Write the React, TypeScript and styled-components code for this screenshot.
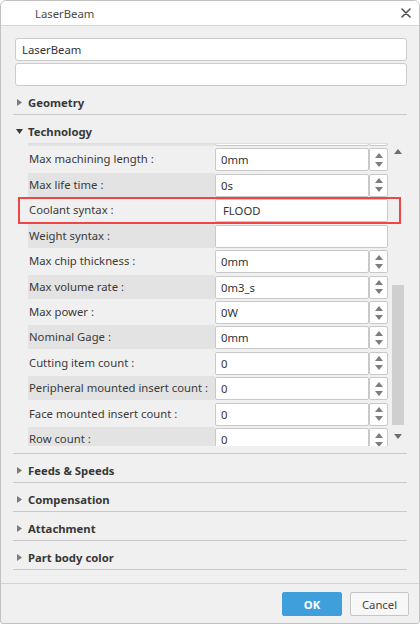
import React, { useLayoutEffect, useRef } from "react";
import styled, { createGlobalStyle } from "styled-components";

const ROW_H = 25.45;
const FS = "11.3px";

const GlobalStyle = createGlobalStyle`
  html, body {
    margin: 0;
    padding: 0;
    background: #ffffff;
  }
  * {
    box-sizing: border-box;
  }
  body {
    font-family: "Noto Sans", "Open Sans", sans-serif;
    color: #333;
  }
`;

const Window = styled.div`
  width: 420px;
  height: 624px;
  border: 1px solid #c2c2c2;
  border-radius: 6px 6px 3px 3px;
  background: #f0f0f0;
  display: flex;
  flex-direction: column;
  overflow: hidden;
`;

const TitleBar = styled.div`
  height: 25px;
  flex: none;
  background: #ffffff;
  border-bottom: 1px solid #d6d6d6;
  display: flex;
  align-items: center;
  justify-content: space-between;
  padding: 0 7px 0 34px;
`;

const Title = styled.span`
  font-size: ${FS};
  color: #4a4a4a;
`;

const CloseButton = styled.div`
  width: 12px;
  height: 12px;
  display: flex;
  align-items: center;
  justify-content: center;
`;

const Body = styled.div`
  flex: 1;
  padding: 12px 12px 0 12px;
  display: flex;
  flex-direction: column;
`;

const NameInput = styled.div`
  height: 23px;
  margin-left: 2px;
  background: #ffffff;
  border: 1px solid #cbcbcb;
  border-radius: 3px;
  padding-left: 6px;
  font-size: ${FS};
  line-height: 21px;
  color: #333;

  & + & {
    margin-top: 2px;
  }
`;

const SectionHeader = styled.div<{ $open?: boolean }>`
  height: ${(p) => (p.$open ? "28px" : "29px")};
  padding-top: 4px;
  display: flex;
  align-items: center;
  gap: 5px;
  border-bottom: ${(p) => (p.$open ? "none" : "1px solid #c9c9c9")};
  font-size: ${FS};
  font-weight: 700;
  color: #383838;
`;

const Arrow = styled.span`
  width: 8px;
  margin-left: 2px;
  display: flex;
  align-items: center;
  justify-content: center;
`;

const SectionContent = styled.div`
  position: relative;
  padding: 0 2px 7px 15px;
  border-bottom: 1px solid #c9c9c9;
`;

const ListFrame = styled.div`
  display: flex;
  height: 303px;
`;

const Viewport = styled.div`
  width: 360px;
  height: 100%;
  overflow: hidden;
  border-top: 1px solid #dedede;
`;

const Row = styled.div`
  height: ${ROW_H}px;
  display: grid;
  grid-template-columns: 187px 173px;
  align-items: start;
`;

const Label = styled.div<{ $striped: boolean }>`
  height: 24px;
  line-height: 24px;
  padding-left: 1px;
  font-size: ${FS};
  color: #3a3a3a;
  white-space: nowrap;
  overflow: hidden;
  background: ${(p) => (p.$striped ? "#e3e3e3" : "transparent")};
`;

const Field = styled.div`
  margin-top: 1px;
  height: 23px;
  display: flex;
`;

const TextBox = styled.div<{ $plain?: boolean }>`
  flex: 1;
  background: #ffffff;
  border: 1px solid #c9c9c9;
  border-radius: 2px;
  padding-left: ${(p) => (p.$plain ? "7px" : "5px")};
  font-size: ${FS};
  line-height: 21px;
  color: #333;
`;

const Spinner = styled.div`
  width: 19px;
  background: #ffffff;
  border: 1px solid #c9c9c9;
  border-radius: 2px;
  display: flex;
  flex-direction: column;
  align-items: center;
  justify-content: center;
  gap: 4px;
`;

const ScrollBar = styled.div`
  width: 17px;
  height: 100%;
  display: flex;
  flex-direction: column;
`;

const ScrollButton = styled.div<{ $h: number }>`
  height: ${(p) => p.$h}px;
  flex: none;
  display: flex;
  align-items: center;
  justify-content: center;
  padding-left: 3px;
`;

const Track = styled.div`
  flex: 1;
  padding-left: 4px;
`;

const Thumb = styled.div`
  width: 12px;
  height: 140px;
  margin-top: 125px;
  background: #cfcfcf;
`;

const Highlight = styled.div`
  position: absolute;
  left: 5px;
  top: 54px;
  width: 383px;
  height: 27px;
  border: 2px solid #f04545;
  pointer-events: none;
`;

const Footer = styled.div`
  flex: none;
  height: 40px;
  border-top: 1px solid #d3d3d3;
  display: flex;
  justify-content: flex-end;
  align-items: flex-start;
  gap: 8px;
  padding: 8px 10px 0 0;
`;

const Button = styled.button<{ $primary?: boolean }>`
  height: 24px;
  width: ${(p) => (p.$primary ? "60px" : "59px")};
  border-radius: 2px;
  font-family: "Noto Sans", "Open Sans", sans-serif;
  font-size: ${FS};
  font-weight: ${(p) => (p.$primary ? 700 : 400)};
  color: ${(p) => (p.$primary ? "#ffffff" : "#444")};
  background: ${(p) => (p.$primary ? "#3f9fdb" : "#f7f7f7")};
  border: 1px solid ${(p) => (p.$primary ? "#3f9fdb" : "#c6c6c6")};
  padding: 0;
`;

const Tri = ({ dir, color, w, h }: { dir: "up" | "down" | "right"; color: string; w: number; h: number }) => {
  const pts =
    dir === "up"
      ? `0,${h} ${w / 2},0 ${w},${h}`
      : dir === "down"
      ? `0,0 ${w},0 ${w / 2},${h}`
      : `0,0 ${w},${h / 2} 0,${h}`;
  return (
    <svg width={w} height={h} viewBox={`0 0 ${w} ${h}`}>
      <polygon points={pts} fill={color} />
    </svg>
  );
};

type Param = { label: string; value: string; spin: boolean };

const params: Param[] = [
  { label: "Diameter :", value: "0mm", spin: true },
  { label: "Corner radius :", value: "0mm", spin: true },
  { label: "Cutting length :", value: "0mm", spin: true },
  { label: "Overall length :", value: "0mm", spin: true },
  { label: "Body diameter :", value: "0mm", spin: true },
  { label: "Number of flutes :", value: "0", spin: true },
  { label: "Tool material :", value: "", spin: false },
  { label: "Max plunge depth :", value: "0mm", spin: true },
  { label: "Max machining depth :", value: "0mm", spin: true },
  { label: "Max cutting length :", value: "0mm", spin: true },
  { label: "Max machining length :", value: "0mm", spin: true },
  { label: "Max life time :", value: "0s", spin: true },
  { label: "Coolant syntax :", value: "FLOOD", spin: false },
  { label: "Weight syntax :", value: "", spin: false },
  { label: "Max chip thickness :", value: "0mm", spin: true },
  { label: "Max volume rate :", value: "0m3_s", spin: true },
  { label: "Max power :", value: "0W", spin: true },
  { label: "Nominal Gage :", value: "0mm", spin: true },
  { label: "Cutting item count :", value: "0", spin: true },
  { label: "Peripheral mounted insert count :", value: "0", spin: true },
  { label: "Face mounted insert count :", value: "0", spin: true },
  { label: "Row count :", value: "0", spin: true },
  { label: "Tool number :", value: "0", spin: true },
];

const collapsed = ["Feeds & Speeds", "Compensation", "Attachment", "Part body color"];

const Section = ({ title, open }: { title: string; open?: boolean }) => (
  <SectionHeader $open={open}>
    <Arrow>
      {open ? <Tri dir="down" color="#3a3a3a" w={7} h={5} /> : <Tri dir="right" color="#7c7c7c" w={5} h={7} />}
    </Arrow>
    {title}
  </SectionHeader>
);

export default function App() {
  const viewport = useRef<HTMLDivElement>(null);

  useLayoutEffect(() => {
    if (viewport.current) viewport.current.scrollTop = ROW_H * 10 - 4;
  }, []);

  return (
    <>
      <GlobalStyle />
      <Window>
        <TitleBar>
          <Title>LaserBeam</Title>
          <CloseButton>
            <svg width="10" height="10" viewBox="0 0 10 10">
              <path d="M1 1 L9 9 M9 1 L1 9" stroke="#505050" strokeWidth="1.6" strokeLinecap="round" />
            </svg>
          </CloseButton>
        </TitleBar>
        <Body>
          <NameInput>LaserBeam</NameInput>
          <NameInput />
          <Section title="Geometry" />
          <Section title="Technology" open />
          <SectionContent>
            <ListFrame>
              <Viewport ref={viewport}>
                {params.map((p, i) => (
                  <Row key={p.label}>
                    <Label $striped={i % 2 === 1}>{p.label}</Label>
                    <Field>
                      <TextBox $plain={!p.spin}>{p.value}</TextBox>
                      {p.spin && (
                        <Spinner>
                          <Tri dir="up" color="#7d7d7d" w={8} h={5} />
                          <Tri dir="down" color="#7d7d7d" w={8} h={5} />
                        </Spinner>
                      )}
                    </Field>
                  </Row>
                ))}
              </Viewport>
              <ScrollBar>
                <ScrollButton $h={17}>
                  <Tri dir="up" color="#6e6e6e" w={8} h={5} />
                </ScrollButton>
                <Track>
                  <Thumb />
                </Track>
                <ScrollButton $h={20}>
                  <Tri dir="down" color="#6e6e6e" w={8} h={5} />
                </ScrollButton>
              </ScrollBar>
            </ListFrame>
            <Highlight />
          </SectionContent>
          {collapsed.map((t) => (
            <Section key={t} title={t} />
          ))}
        </Body>
        <Footer>
          <Button $primary>OK</Button>
          <Button>Cancel</Button>
        </Footer>
      </Window>
    </>
  );
}
